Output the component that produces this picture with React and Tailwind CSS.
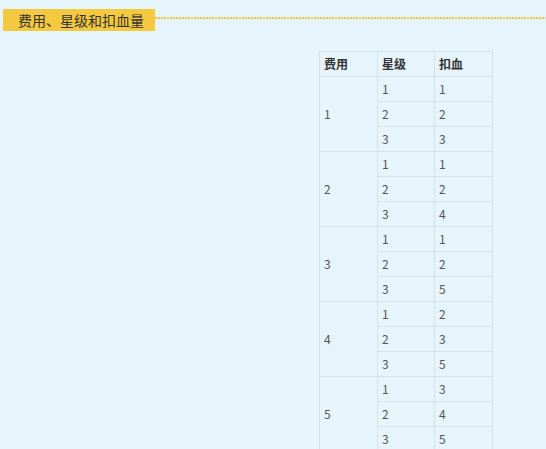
const ROWS = [
  { cost: 1, data: [[1, 1], [2, 2], [3, 3]] },
  { cost: 2, data: [[1, 1], [2, 2], [3, 4]] },
  { cost: 3, data: [[1, 1], [2, 2], [3, 5]] },
  { cost: 4, data: [[1, 2], [2, 3], [3, 5]] },
  { cost: 5, data: [[1, 3], [2, 4], [3, 5]] },
];

const cell = "h-[25px] border border-[#d3e3ec] px-[4px] py-0 align-middle";

export default function App() {
  return (
    <div
      className="h-[449px] w-[546px] overflow-hidden bg-[#e6f4fc] pl-[3px] pt-[9px]"
      style={{ fontFamily: '"Noto Sans CJK SC", "Noto Sans", sans-serif' }}
    >
      <div className="flex items-start">
        <div className="flex h-[22px] w-[152px] items-center bg-[#f4c83f] pl-[15px] text-[14px] text-[#333]">
          费用、星级和扣血量
        </div>
        <div className="mt-[8px] h-[2px] flex-1 bg-[repeating-linear-gradient(90deg,#f2c443_0_2px,transparent_2px_3px)]" />
      </div>
      <table className="ml-[316px] mt-[20px] border-collapse text-left text-[12px] text-[#555]">
        <thead>
          <tr>
            <th className={`${cell} w-[58px] font-bold text-[#333]`}>费用</th>
            <th className={`${cell} w-[57px] font-bold text-[#333]`}>星级</th>
            <th className={`${cell} w-[58px] font-bold text-[#333]`}>扣血</th>
          </tr>
        </thead>
        <tbody>
          {ROWS.map((group) =>
            group.data.map(([star, hp], i) => (
              <tr key={`${group.cost}-${star}`}>
                {i === 0 ? (
                  <td rowSpan={3} className={cell}>
                    {group.cost}
                  </td>
                ) : null}
                <td className={cell}>{star}</td>
                <td className={cell}>{hp}</td>
              </tr>
            ))
          )}
        </tbody>
      </table>
    </div>
  );
}
